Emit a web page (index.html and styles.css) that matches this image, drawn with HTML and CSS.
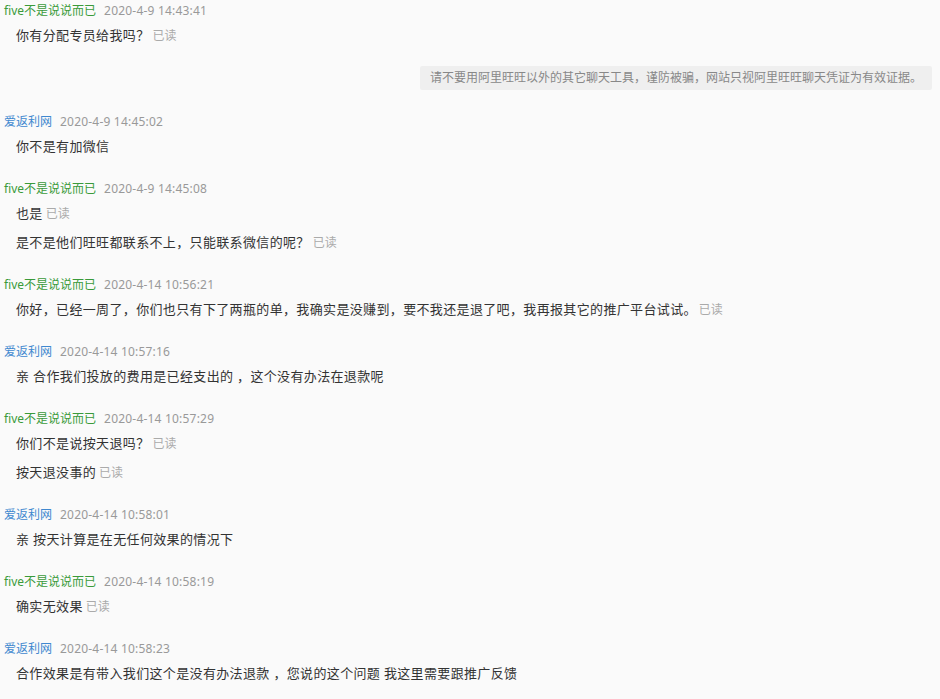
FILE: index.html
```html
<!DOCTYPE html>
<html lang="zh-CN">
<head>
<meta charset="utf-8">
<title>聊天记录</title>
<link rel="stylesheet" href="styles.css">
</head>
<body>
<div class="chat">
  <div class="group">
    <div class="head"><span class="name buyer">five不是说说而已</span><span class="time">2020-4-9 14:43:41</span></div>
    <div class="msg">你有分配专员给我吗？<span class="read">已读</span></div>
  </div>
  <div class="notice-row"><div class="notice">请不要用阿里旺旺以外的其它聊天工具，谨防被骗，网站只视阿里旺旺聊天凭证为有效证据。</div></div>
  <div class="group">
    <div class="head"><span class="name seller">爱返利网</span><span class="time">2020-4-9 14:45:02</span></div>
    <div class="msg">你不是有加微信</div>
  </div>
  <div class="group">
    <div class="head"><span class="name buyer">five不是说说而已</span><span class="time">2020-4-9 14:45:08</span></div>
    <div class="msg">也是<span class="read">已读</span></div>
    <div class="msg">是不是他们旺旺都联系不上，只能联系微信的呢？<span class="read">已读</span></div>
  </div>
  <div class="group">
    <div class="head"><span class="name buyer">five不是说说而已</span><span class="time">2020-4-14 10:56:21</span></div>
    <div class="msg">你好，已经一周了，你们也只有下了两瓶的单，我确实是没赚到，要不我还是退了吧，我再报其它的推广平台试试。<span class="read wide">已读</span></div>
  </div>
  <div class="group">
    <div class="head"><span class="name seller">爱返利网</span><span class="time">2020-4-14 10:57:16</span></div>
    <div class="msg">亲 合作我们投放的费用是已经支出的 ，这个没有办法在退款呢</div>
  </div>
  <div class="group">
    <div class="head"><span class="name buyer">five不是说说而已</span><span class="time">2020-4-14 10:57:29</span></div>
    <div class="msg">你们不是说按天退吗？<span class="read">已读</span></div>
    <div class="msg">按天退没事的<span class="read">已读</span></div>
  </div>
  <div class="group">
    <div class="head"><span class="name seller">爱返利网</span><span class="time">2020-4-14 10:58:01</span></div>
    <div class="msg">亲 按天计算是在无任何效果的情况下</div>
  </div>
  <div class="group">
    <div class="head"><span class="name buyer">five不是说说而已</span><span class="time">2020-4-14 10:58:19</span></div>
    <div class="msg">确实无效果<span class="read">已读</span></div>
  </div>
  <div class="group">
    <div class="head"><span class="name seller">爱返利网</span><span class="time">2020-4-14 10:58:23</span></div>
    <div class="msg">合作效果是有带入我们这个是没有办法退款 ，您说的这个问题 我这里需要跟推广反馈</div>
  </div>
</div>
</body>
</html>
```
FILE: styles.css
```css
html, body {
  margin: 0;
  padding: 0;
  background: #fafafa;
}
body {
  font-family: "Noto Sans", "Noto Sans CJK SC", sans-serif;
  color: #333;
  overflow: hidden;
}
.chat {
  display: flex;
  flex-direction: column;
  padding: 1px 8px 0 4px;
}
.group {
  padding-bottom: 18px;
}
.head {
  height: 20px;
  line-height: 20px;
  font-size: 12px;
  white-space: nowrap;
}
.name.buyer {
  color: #3a9a3a;
}
.name.seller {
  color: #4088cf;
}
.time {
  color: #999;
  margin-left: 8px;
  letter-spacing: 0.2px;
}
.msg {
  height: 29px;
  line-height: 29px;
  font-size: 13px;
  padding-left: 12px;
  white-space: nowrap;
  color: #333;
  letter-spacing: 0.35px;
}
.read {
  font-size: 12px;
  color: #aaa;
  margin-left: 3px;
  letter-spacing: 0;
}
.read.wide {
  margin-left: 2px;
}
.notice-row {
  display: flex;
  justify-content: flex-end;
  margin: -2px 0 22px;
}
.notice {
  height: 24px;
  line-height: 24px;
  padding: 0 10px;
  font-size: 12px;
  color: #888;
  background: #efefef;
  border-radius: 2px;
  white-space: nowrap;
}
```
